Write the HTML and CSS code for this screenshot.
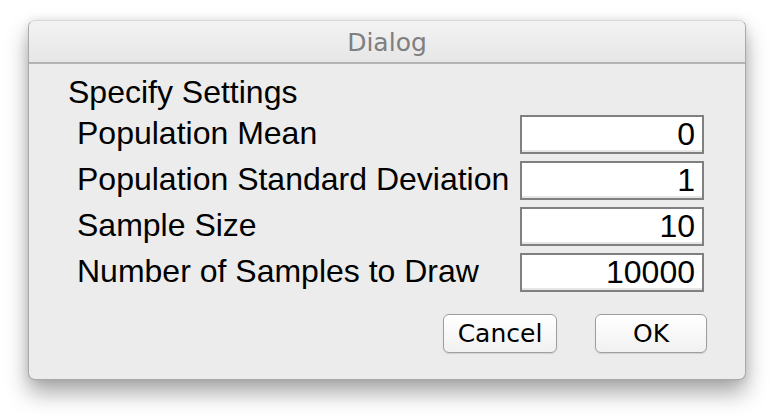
FILE: index.html
```html
<!DOCTYPE html>
<html>
<head>
<meta charset="utf-8">
<link rel="stylesheet" href="styles.css">
</head>
<body>
<div class="window">
  <div class="titlebar">Dialog</div>
  <div class="content">
    <div class="heading">Specify Settings</div>
    <div class="rows">
      <div class="row"><span class="label">Population Mean</span><div class="field">0</div></div>
      <div class="row"><span class="label">Population Standard Deviation</span><div class="field">1</div></div>
      <div class="row"><span class="label">Sample Size</span><div class="field">10</div></div>
      <div class="row"><span class="label">Number of Samples to Draw</span><div class="field">10000</div></div>
    </div>
    <div class="buttons">
      <button class="btn btn-cancel">Cancel</button>
      <button class="btn btn-ok">OK</button>
    </div>
  </div>
</div>
</body>
</html>
```
FILE: styles.css
```css
html, body {
  margin: 0;
  padding: 0;
  background: #ffffff;
}
body {
  width: 774px;
  height: 420px;
  overflow: hidden;
  padding-top: 20px;
  padding-left: 28px;
  box-sizing: border-box;
}
.window {
  width: 718px;
  height: 360px;
  box-sizing: border-box;
  background: #ececec;
  border: 1px solid #a9a9a9;
  border-top-color: #d8d8d8;
  border-radius: 7px;
  box-shadow: 0 13px 22px rgba(0,0,0,0.34), 0 0 10px rgba(0,0,0,0.10);
  overflow: hidden;
  font-family: "Liberation Sans", Arial, sans-serif;
}
.titlebar {
  height: 43px;
  box-sizing: border-box;
  border-bottom: 2px solid #b3b3b3;
  background: linear-gradient(#f3f3f3, #e6e6e6);
  color: #7f7f7f;
  font-family: "DejaVu Sans", sans-serif;
  font-size: 25px;
  line-height: 44px;
  text-align: center;
}
.content {
  padding: 8px 38px 0 39px;
  display: flex;
  flex-direction: column;
}
.heading {
  font-size: 32px;
  line-height: 40px;
  color: #000;
  height: 43px;
}
.rows {
  display: flex;
  flex-direction: column;
  gap: 7px;
  padding-left: 9px;
  padding-right: 3px;
}
.row {
  display: flex;
  align-items: center;
  justify-content: space-between;
  height: 39px;
}
.label {
  font-size: 32px;
  color: #000;
  line-height: 36px;
  padding-bottom: 3px;
}
.field {
  width: 184px;
  height: 39px;
  box-sizing: border-box;
  border: 2px solid #808080;
  background: #fff;
  box-shadow: inset 0 -2px 0 #e6e6e6;
  font-size: 32px;
  line-height: 34px;
  text-align: right;
  padding-right: 7px;
  color: #000;
}
.buttons {
  display: flex;
  justify-content: flex-end;
  gap: 38px;
  margin-top: 22px;
}
.btn {
  height: 39px;
  box-sizing: border-box;
  border: 1px solid #9e9e9e;
  border-radius: 6px;
  background: linear-gradient(#ffffff, #f1f1f1);
  box-shadow: 0 1px 1px rgba(0,0,0,0.12);
  font-family: "DejaVu Sans", sans-serif;
  font-size: 25px;
  color: #000;
  padding: 0;
}
.btn-cancel { width: 114px; }
.btn-ok { width: 112px; }
```
